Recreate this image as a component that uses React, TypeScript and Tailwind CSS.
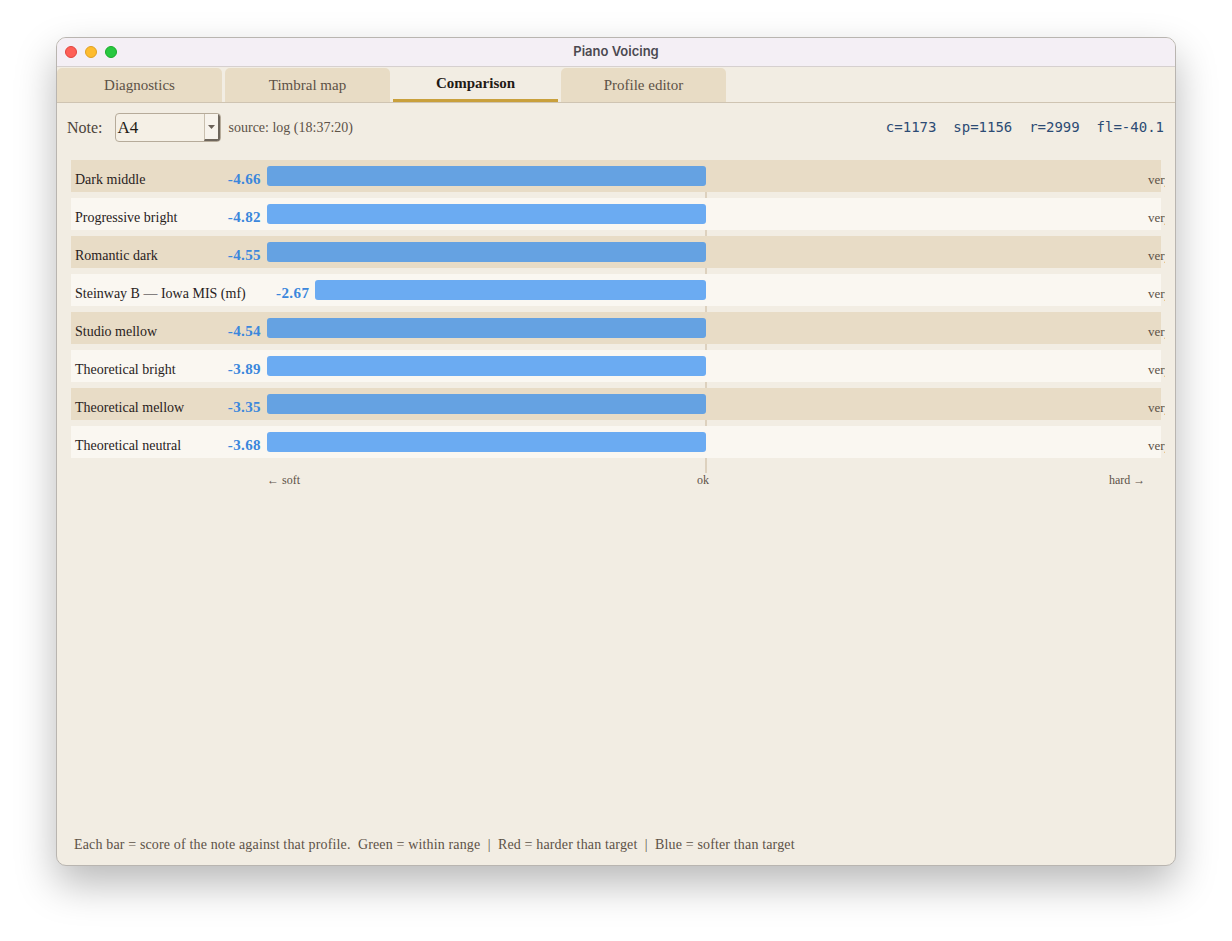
import React from "react";

type Row = { name: string; score: number };

const rows: Row[] = [
  { name: "Dark middle", score: -4.66 },
  { name: "Progressive bright", score: -4.82 },
  { name: "Romantic dark", score: -4.55 },
  { name: "Steinway B — Iowa MIS (mf)", score: -2.67 },
  { name: "Studio mellow", score: -4.54 },
  { name: "Theoretical bright", score: -3.89 },
  { name: "Theoretical mellow", score: -3.35 },
  { name: "Theoretical neutral", score: -3.68 },
];

const HALF = 439; // px from centre to either end of the scale
const MAX = 3;

const serif = "font-['Liberation_Serif',serif]";

function TrafficLights() {
  return (
    <div className="absolute left-[8px] top-0 flex h-full items-center gap-[8px]">
      <span className="h-[12px] w-[12px] rounded-full border border-[#e0443e] bg-[#fe5f57]" />
      <span className="h-[12px] w-[12px] rounded-full border border-[#dea123] bg-[#febc2e]" />
      <span className="h-[12px] w-[12px] rounded-full border border-[#1aab29] bg-[#28c840]" />
    </div>
  );
}

function Tabs() {
  const tabs = ["Diagnostics", "Timbral map", "Comparison", "Profile editor"];
  return (
    <div className="flex h-[36px] gap-[3px] border-b border-[#cfc4b2] pt-px">
      {tabs.map((t) =>
        t === "Comparison" ? (
          <div
            key={t}
            className={`flex w-[165px] items-center justify-center border-b-[3px] border-[#c9a03c] text-[15px] font-bold text-[#1f1a15] ${serif}`}
          >
            {t}
          </div>
        ) : (
          <div
            key={t}
            className={`flex w-[165px] items-center justify-center rounded-t-[5px] bg-[#e8dcc5] text-[15px] text-[#5d5247] ${serif}`}
          >
            {t}
          </div>
        )
      )}
    </div>
  );
}

function ChartRow({ row, odd }: { row: Row; odd: boolean }) {
  const len = Math.min(Math.abs(row.score) / MAX, 1) * HALF;
  return (
    <div
      className={`relative flex h-[32px] w-[1090px] items-center ${odd ? "bg-[#e8dcc6]" : "bg-[#faf7f1]"}`}
    >
      <div className={`w-[196px] shrink-0 pl-[4px] pt-[6px] text-[14px] text-[#28221c] ${serif}`}>
        {row.name}
      </div>
      <div className="flex h-full w-[439px] shrink-0 items-center justify-end gap-[6px]">
        <span
          className={`shrink-0 whitespace-nowrap pt-[7px] text-[15px] font-bold tracking-[0.4px] text-[#3b87dc] ${serif}`}
        >
          {row.score.toFixed(2)}
        </span>
        <div
          className={`h-[20px] shrink-0 rounded-[3px] ${odd ? "bg-[#65a2e2]" : "bg-[#6babf2]"}`}
          style={{ width: len }}
        />
      </div>
      <div className="flex-1" />
      <span
        className={`absolute left-[1077px] top-[10px] whitespace-nowrap text-[13px] text-[#5d5247] ${serif}`}
      >
        very hard
      </span>
    </div>
  );
}

export default function App() {
  return (
    <div className="min-h-[941px] bg-white pl-[56px] pt-[37px]">
      <div className="flex h-[829px] w-[1120px] flex-col overflow-hidden rounded-[10px] border border-[#b9b5b0] bg-[#f2ede3] shadow-[0_18px_40px_rgba(0,0,0,0.28)]">
        {/* title bar */}
        <div className="relative flex h-[29px] shrink-0 items-center justify-center border-b border-[#d6d0cf] bg-[#f4eff5]">
          <TrafficLights />
          <span className="font-['Inter',sans-serif] text-[13px] font-semibold text-[#4b4950]">
            Piano Voicing
          </span>
        </div>

        <Tabs />

        {/* note selector + stats */}
        <div className="flex items-center pl-[10px] pr-[11px] pt-[10px]">
          <span className={`text-[16px] text-[#4d443a] ${serif}`}>Note:</span>
          <div className="ml-[12px] flex h-[29px] w-[106px] items-stretch overflow-hidden rounded-[4px] border border-[#b6ab9a] bg-[#f5f0e6]">
            <span className={`flex flex-1 items-center pl-[2px] text-[17px] text-[#1f1a15] ${serif}`}>A4</span>
            <span className="flex w-[16px] items-center justify-center border-l border-r-2 border-b-2 border-l-[#c9bfae] border-r-[#6e665c] border-b-[#6e665c] bg-[#f7f3ec]">
              <svg width="7" height="4" viewBox="0 0 7 4">
                <path d="M0 0h7L3.5 4z" fill="#6b6259" />
              </svg>
            </span>
          </div>
          <span className={`ml-[8px] text-[14px] text-[#5d5247] ${serif}`}>source: log (18:37:20)</span>
          <span className="ml-auto whitespace-pre font-['DejaVu_Sans_Mono',monospace] text-[14px] text-[#2c4b74]">
            {"c=1173  sp=1156  r=2999  fl=-40.1"}
          </span>
        </div>

        {/* chart */}
        <div className="relative ml-[14px] mt-[18px] w-[1094px] overflow-hidden">
          <div className="absolute left-[634px] top-0 h-[313px] w-[2px] bg-[#ddd1be]" />
          <div className="relative flex flex-col gap-[6px]">
            {rows.map((r, i) => (
              <ChartRow key={r.name} row={r} odd={i % 2 === 0} />
            ))}
          </div>
          <div className={`relative mt-[13px] h-[16px] text-[12px] text-[#5d5247] ${serif}`}>
            <span className="absolute left-[196px] top-0">← soft</span>
            <span className="absolute left-[626px] top-0">ok</span>
            <span className="absolute left-[1038px] top-0 whitespace-nowrap">hard →</span>
          </div>
        </div>

        <div className="flex-1" />
        <div className={`whitespace-pre pb-[10px] pl-[17px] text-[14px] tracking-[0.15px] text-[#5d5247] ${serif}`}>
          {"Each bar = score of the note against that profile.  Green = within range  |  Red = harder than target  |  Blue = softer than target"}
        </div>
      </div>
    </div>
  );
}
